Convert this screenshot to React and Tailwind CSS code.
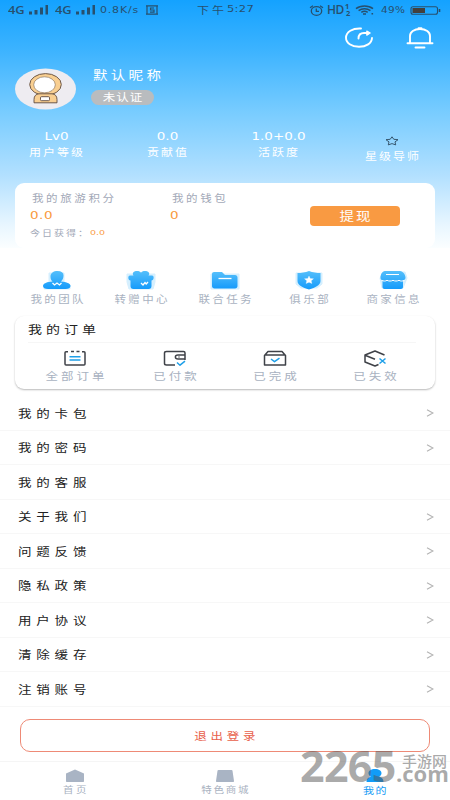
import React from 'react'
import clsx from 'clsx'

const menuItems = [
  { label: '我的卡包', arrow: true },
  { label: '我的密码', arrow: true },
  { label: '我的客服', arrow: false },
  { label: '关于我们', arrow: true },
  { label: '问题反馈', arrow: true },
  { label: '隐私政策', arrow: true },
  { label: '用户协议', arrow: true },
  { label: '清除缓存', arrow: true },
  { label: '注销账号', arrow: true },
]

// Chinese labels are drawn wide and a little flattened
function Label({ className, children }) {
  return (
    <span className={clsx('block whitespace-nowrap leading-none scale-y-[0.85]', className)}>{children}</span>
  )
}

// Latin digits use the same wide look
function Num({ className, children }) {
  return (
    <span className={clsx("block whitespace-nowrap leading-none font-['DejaVu_Sans'] scale-y-[0.82]", className)}>
      {children}
    </span>
  )
}

function Signal() {
  return (
    <svg width="20" height="10" viewBox="0 0 20 10" fill="#27506f">
      <rect x="0" y="6.5" width="3" height="3" />
      <rect x="5.5" y="5" width="3" height="4.5" />
      <rect x="11" y="2.5" width="3" height="7" />
      <rect x="16.5" y="0" width="2.5" height="9.5" />
    </svg>
  )
}

function StatusBar() {
  return (
    <div className="flex h-5 items-center pl-2 pr-[7px] text-[#27506f]">
      <span className="w-[21px] origin-left scale-x-[1.12] font-['Open_Sans'] text-[11.5px] font-semibold leading-none">4G</span>
      <Signal />
      <span className="ml-[6px] w-[21px] origin-left scale-x-[1.12] font-['Open_Sans'] text-[11.5px] font-semibold leading-none">4G</span>
      <Signal />
      <Num className="ml-[4px] w-[45px] text-[11px] tracking-[0.8px]">0.8K/s</Num>
      <svg width="14" height="10" viewBox="0 0 14 10" fill="none" stroke="#27506f" strokeWidth="1.2">
        <path d="M1 .8h12M1 9.2h12M2 .8v8.4M12 .8v8.4M9 3H5.5v2H9v2.2H5" />
      </svg>
      <Label className="ml-[38px] w-[30px] text-[12px] tracking-[3px]">下午</Label>
      <Num className="w-[82px] text-[11.5px] tracking-[0.3px]">5:27</Num>
      <svg width="15" height="11" viewBox="0 0 15 11" fill="none" stroke="#27506f" strokeWidth="1.3">
        <ellipse cx="7.5" cy="6" rx="5.2" ry="4.3" />
        <path d="M1 2.8L4 .8M14 2.8L11 .8M7.3 3.5v2.8h2.7" />
      </svg>
      <span className="ml-[3px] w-[18px] font-['Open_Sans'] text-[12px] font-semibold leading-none tracking-[-0.6px]">HD</span>
      <span className="flex w-[10px] flex-col font-['Open_Sans'] text-[7.5px] font-bold leading-[7px]">
        <span>1</span>
        <span className="pl-px">2</span>
      </span>
      <svg width="20" height="10" viewBox="0 0 20 10" fill="none" stroke="#27506f" strokeWidth="1.5">
        <path d="M1 3.6C5.5 0 13.5 0 18 3.6M3.6 5.6C7 3 12 3 15.4 5.6M6.3 7.4c2-1.3 4.4-1.3 6.4 0" />
        <path d="M8 9h3M16.5 8.8h1.6" />
      </svg>
      <Num className="ml-[6px] w-[29px] text-[10.5px] tracking-[0.3px]">49%</Num>
      <svg width="31" height="9" viewBox="0 0 31 9" fill="none" stroke="#27506f">
        <rect x="1" y=".7" width="26.5" height="7.6" rx="2" strokeWidth="1.1" />
        <rect x="2.5" y="2" width="12.5" height="5" fill="#44403c" stroke="none" />
        <path d="M29.5 3v3" strokeWidth="1.6" />
      </svg>
    </div>
  )
}

function Avatar() {
  return (
    <svg width="61" height="42" viewBox="0 0 61 42">
      <ellipse cx="30.5" cy="21" rx="30.5" ry="20.6" fill="#eeecf1" />
      <ellipse cx="30.5" cy="16.5" rx="15.8" ry="10.9" fill="#f9cf91" stroke="#5d4a3e" strokeWidth=".9" />
      <path d="M19 34.8v-3.3c0-3.5 2-5.5 5-5.7h13c3 .2 5 2.200 5 5.700v3.300z" fill="#f9cf91" stroke="#5d4a3e" strokeWidth=".9" />
      <ellipse cx="29.5" cy="16.8" rx="10.8" ry="8" fill="#fff" stroke="#7a6450" strokeWidth=".6" />
      <rect x="25.5" y="28.7" width="9" height="4" rx="1" fill="#fff" stroke="#5d4a3e" strokeWidth=".9" />
    </svg>
  )
}

function Stat({ value, label }) {
  return (
    <div className="flex w-[112px] flex-col items-center">
      <Num className="ml-[2px] text-[13.5px]">{value}</Num>
      <Label className="-mr-[3px] mt-[2px] text-[12px] tracking-[2px]">{label}</Label>
    </div>
  )
}

function Header() {
  return (
    <>
      <div className="flex h-[36px] items-center justify-end gap-[32px] pr-4">
        {/* Share */}
        <svg width="30" height="22" viewBox="0 0 30 22" fill="none" stroke="#fff" strokeWidth="1.9" strokeLinecap="round">
          <path d="M17 1.5C8.5 1 2 5 2 10.8 2 16 7.5 19.8 15 19.8c7.2 0 12.8-3.6 13-8.8" />
          <path d="M14.5 11.5c0-3.5 2-5.500 5.500-5.500h3" />
          <path d="M22.8 4l3.4 2-3.4 2.200z" fill="#fff" strokeWidth="1.2" strokeLinejoin="round" />
        </svg>
        {/* Notifications */}
        <svg width="28" height="22" viewBox="0 0 28 22" fill="none" stroke="#fff" strokeWidth="1.9" strokeLinecap="round">
          <path d="M4 15.7V9c0-4 4-7 10-7s10 3 10 7v6.700M1.500 16.200h25M9.500 20.500h9" />
          <path d="M12.5 1.300h3" />
        </svg>
      </div>
      <div className="flex pl-[15px] pt-[12px] text-white">
        <Avatar />
        <div className="ml-[15px]">
          <Label className="ml-[2px] text-[14.5px] tracking-[3.3px]">默认昵称</Label>
          <div className="mt-[7px] flex h-[15px] w-[63px] items-center justify-center rounded-full bg-[#b9bcbf]">
            <Label className="-mr-[1px] text-[12.5px] tracking-[1px]">未认证</Label>
          </div>
        </div>
      </div>
      <div className="flex h-[73px] pt-[20px] text-white">
        <Stat value="Lv0" label="用户等级" />
        <Stat value="0.0" label="贡献值" />
        <Stat value="1.0+0.0" label="活跃度" />
        <div className="flex w-[118px] flex-col items-center pt-[6px]">
          <svg width="14" height="10" viewBox="0 0 14 10" fill="none" stroke="#2d4a60" strokeWidth=".9">
            <path d="M7 .8l1.8 2.5 4.2.4-3 2.2.7 3L7 7.6 3.3 8.900l.7-3-3-2.200 4.200-.4z" strokeLinejoin="round" />
          </svg>
          <Label className="-mr-[3px] mt-[4px] text-[12px] tracking-[2px]">星级导师</Label>
        </div>
      </div>
    </>
  )
}

function Wallet() {
  return (
    <div className="mx-[15px] flex h-[65px] rounded-[9px] bg-white pl-[15px] text-[#a3a9b8]">
      <div className="w-[140px] pt-[10px]">
        <Label className="ml-[2px] text-[11.5px] tracking-[2.6px]">我的旅游积分</Label>
        <Num className="mt-[4px] text-[13.5px] tracking-[0.5px] text-[#f99a3e]">0.0</Num>
        <div className="mt-[6px] flex items-center">
          <Label className="w-[60px] text-[10px] tracking-[2px]">今日获得：</Label>
          <Num className="text-[9.5px] text-[#f99a3e]">0.0</Num>
        </div>
      </div>
      <div className="w-[139px] pt-[10px]">
        <Label className="ml-[2px] text-[11.5px] tracking-[2.6px]">我的钱包</Label>
        <Num className="mt-[4px] text-[13.5px] text-[#f99a3e]">0</Num>
      </div>
      <button className="ml-[1px] mt-[23px] flex h-[20px] w-[90px] items-center justify-center rounded-[4px] bg-[#f99a42] text-white">
        <Label className="-mr-[2px] text-[14.5px] tracking-[2px]">提现</Label>
      </button>
    </div>
  )
}

const shortcuts = [
  {
    label: '我的团队',
    halo: <path d="M7 3h15v9l6 3v4H2v-5l5-2z" />,
    icon: <path d="M15.5 1c4 0 6 1.5 6 4.5 0 2.5-1 4.500-2.500 6 5.500.3 9.500 2 9.500 4.500 0 2-2 3-5 3H6c-3 0-5-1-5-3 0-2.500 4.500-4.300 9.500-4.500-1.500-1.300-2-3-2-5C8.500 3 11.500 1 15.500 1z" />,
    mark: <path d="M10.5 13l2 2 2.5-2 2.5 2 2-2" />,
  },
  {
    label: '转赠中心',
    halo: <path d="M1 4h28v8l-2 7H3L1 12z" />,
    icon: <path d="M4 5.5h3.5C5.5 3 8 1 11 1c2 0 3.500.7 4 1.700C15.500 1.700 17 1 19 1c3 0 5.500 2 3.500 4.500H26c2.500 0 2 5-.5 5V16c0 2-1 3-3 3h-15c-2 0-3-1-3-3v-5.500c-2.500 0-3-5-.5-5z" />,
    mark: <path d="M15 13l2 2 2-2.5 1.200 1.500 1.800-2" />,
  },
  {
    label: '联合任务',
    halo: <path d="M1 4h28v15H1z" />,
    icon: <path d="M4 2h8l3 3h10c1.5 0 2.5 1 2.5 2.500V16c0 1.500-1 2.500-2.500 2.500H4.500C3 18.500 2 17.500 2 16V4c0-1.200.8-2 2-2z" />,
    mark: <path d="M8.5 8.500h13" />,
  },
  {
    label: '俱乐部',
    halo: <path d="M2 3h26v11l-5 4H7l-5-4z" />,
    icon: <path d="M15 1c4 1.5 7.500 2 11.500 2v8c0 4-5 6.500-11.500 8.500C8.500 17.500 3.500 15 3.500 11V3C7.500 3 11 2.500 15 1z" />,
    mark: <path d="M15 6l1.2 2.5 3.3.3-2.300 2 .7 2.700-2.900-1.300-2.900 1.300.7-2.700-2.300-2 3.300-.3z" fill="#fff" strokeWidth=".3" />,
  },
  {
    label: '商家信息',
    halo: <path d="M6 2h21l2 6-4 10H4L2 8z" />,
    icon: <path d="M7 1h15c3 0 5.5 4 5.5 6.500 0 1.500-.8 2.500-2.500 3V17c0 1.200-.8 2-2 2H6.500c-1.200 0-2-.8-2-2v-6.500C3 10 2.500 9 2.500 7.500 2.500 5 4 1 7 1z" />,
    mark: <path d="M8 4.5h13M3.500 10.300c2 1 4 1 5.500 0 2 1 4 1 6 0 2 1 4 1 6 0 1.500 1 3.500 1 5.500 0" strokeWidth="1" />,
  },
]

function Shortcuts() {
  return (
    <div className="mx-[15px] grid h-[68px] grid-cols-5 pt-[22px]">
      {shortcuts.map((item) => (
        <div key={item.label} className="flex flex-col items-center">
          <svg width="30" height="20" viewBox="0 0 30 20">
            <defs>
              <linearGradient id="shortcutFill" x1="0" y1="0" x2="0" y2="1">
                <stop offset="0" stopColor="#55bffb" />
                <stop offset="1" stopColor="#159bfb" />
              </linearGradient>
            </defs>
            <g fill="#d5effe" stroke="#d5effe" strokeLinejoin="round">{item.halo}</g>
            <g fill="url(#shortcutFill)">{item.icon}</g>
            <g fill="none" stroke="#fff" strokeWidth="1.3">{item.mark}</g>
          </svg>
          <Label className="-mr-[2.4px] mt-[4px] text-[11.5px] tracking-[2.4px] text-[#a9b2c1]">{item.label}</Label>
        </div>
      ))}
    </div>
  )
}

const orders = [
  {
    label: '全部订单',
    icon: (
      <>
        <path d="M5 1.8H3c-.6 0-1 .3-1 1V14c0 .6.4 1 1 1h18c.6 0 1-.4 1-1V2.800c0-.7-.4-1-1-1h-2M8 1.500h3M13.500 1.500h3" stroke="#3f4248" />
        <path d="M6.5 6.800h11M6.500 10h11" stroke="#1e9fe8" />
      </>
    ),
  },
  {
    label: '已付款',
    icon: (
      <>
        <path d="M12 15H3.500C2 15 1.500 14.500 1.500 13.500V3c0-1 .7-1.500 2-1.500h17c1 0 1.500.5 1.500 1.500v7M22 5h-7c-3.500 0-3.500 4 0 4h7M15.500 7h1" stroke="#3f4248" />
        <path d="M14 12.500l3 2.700 5-4" stroke="#1e9fe8" />
      </>
    ),
  },
  {
    label: '已完成',
    icon: (
      <>
        <path d="M1.500 5.500L5 1.500h14l3.500 4V15h-21zM2 5h20" stroke="#3f4248" />
        <path d="M8 9l3.500 2.700 5-3.500" stroke="#1e9fe8" />
      </>
    ),
  },
  {
    label: '已失效',
    icon: (
      <>
        <path d="M21.500 5L12 1 2 5v7l10 4 3.500-1.500M2 5.300l10 4" stroke="#3f4248" />
        <path d="M16.500 8.500l6 5M22.500 8.500l-6 5" stroke="#1e9fe8" />
      </>
    ),
  },
]

function Orders() {
  return (
    <div className="mx-[15px] h-[74px] rounded-[9px] bg-white px-[10px] shadow-[0_1px_2px_rgba(0,0,0,0.28)]">
      <div className="ml-[3px] mr-[9px] h-[27px] border-b border-[#f6f6f6] pt-[6px]">
        <Label className="text-[14px] tracking-[4px] text-[#222]">我的订单</Label>
      </div>
      <div className="grid grid-cols-4 pt-[7px]">
        {orders.map((order) => (
          <div key={order.label} className="flex flex-col items-center">
            <svg width="24" height="17" viewBox="0 0 24 17" fill="none" strokeWidth="1.5" strokeLinejoin="round">
              {order.icon}
            </svg>
            <Label className="-mr-[3px] mt-[3px] text-[12.5px] tracking-[3px] text-[#a9b2c1]">{order.label}</Label>
          </div>
        ))}
      </div>
    </div>
  )
}

function TabBar() {
  return (
    <nav className="grid h-[39px] grid-cols-3 border-t border-[#f5f5f5] pt-[7px] text-[#a9b2c1]">
      <div className="flex flex-col items-center">
        <svg width="20" height="14" viewBox="0 0 20 14" fill="#a9b4c4">
          <path d="M1 4.500l9-4 9 4v7.500c0 .6-.3 1-1 1H2c-.7 0-1-.4-1-1z" />
        </svg>
        <Label className="-mr-[2px] mt-[2px] text-[10.5px] tracking-[2.5px]">首页</Label>
      </div>
      <div className="flex flex-col items-center">
        <svg width="20" height="14" viewBox="0 0 20 14" fill="#a9b4c4">
          <path d="M3.500 1h13c.6 0 1 .3 1 .8L19 12c0 .6-.3 1-1 1H2c-.7 0-1-.4-1-1L2.500 1.800c0-.5.4-.8 1-.8z" />
        </svg>
        <Label className="-mr-[1.5px] mt-[2px] text-[10.5px] tracking-[1.8px]">特色商城</Label>
      </div>
      <div className="flex flex-col items-center text-[#159bf5]">
        <svg width="20" height="14" viewBox="0 0 20 14" fill="#119cf8">
          <path d="M10 0c4 0 6.500 1.700 6.500 4.200 0 1.500-1 2.700-2.300 3.500C17 8.500 18.500 10 18.500 13h-17c0-3 1.500-4.500 4.300-5.300C4.500 6.900 3.500 5.700 3.500 4.200 3.500 1.700 6 0 10 0z" />
        </svg>
        <Label className="-mr-[1px] mt-[2px] text-[11px] tracking-[1.5px]">我的</Label>
      </div>
    </nav>
  )
}

function Watermark() {
  return (
    <div className="pointer-events-none absolute left-[300px] top-[747px] flex h-[36px] w-[150px] text-[#555]/50">
      <span className="block w-[96px] font-['Open_Sans'] text-[43px] font-bold leading-[38px] tracking-[-0.7px]">2265</span>
      <div className="w-[54px]">
        <span className="ml-[6px] mt-[6px] block whitespace-nowrap text-[15px] font-medium leading-[15px]">手游网</span>
        <span className="block origin-left scale-x-[1.05] font-['Open_Sans'] text-[21px] font-bold leading-[12px]">.com</span>
      </div>
    </div>
  )
}

export default function App() {
  return (
    <div className="relative flex h-[800px] w-[450px] flex-col overflow-hidden bg-white font-['Noto_Sans_CJK_SC',sans-serif]">
      <div className="h-[248px] shrink-0 bg-[linear-gradient(180deg,#14a2ff_0px,#3cb3ff_50px,#78ccff_112px,#b2e0ff_175px,#e8f6ff_225px,#fbfeff_248px)]">
        <StatusBar />
        <Header />
        <Wallet />
      </div>
      <Shortcuts />
      <Orders />

      {/* Menu */}
      <div className="mt-[7px] h-[313px] shrink-0">
        {menuItems.map((item) => (
          <div key={item.label} className="flex h-[34.5px] items-center justify-between border-b border-[#f7f7f7] pl-[18px] pr-[16px] pt-px">
            <Label className="text-[13.5px] tracking-[4.8px] text-[#222]">{item.label}</Label>
            {item.arrow && (
              <svg width="8" height="8" viewBox="0 0 8 8" fill="none" stroke="#b3b3b3" strokeWidth="1.1">
                <path d="M1 .8l6 3.2-6 3.2" />
              </svg>
            )}
          </div>
        ))}
      </div>

      {/* Logout */}
      <button className="mx-[20px] mb-[9px] mt-[10px] flex h-[33px] shrink-0 items-center justify-center rounded-[10px] border border-[#ee8a76] pt-px text-[#e8604a]">
        <Label className="-mr-[3.5px] text-[12.5px] tracking-[3.8px]">退出登录</Label>
      </button>
      <TabBar />
      <Watermark />
    </div>
  )
}
